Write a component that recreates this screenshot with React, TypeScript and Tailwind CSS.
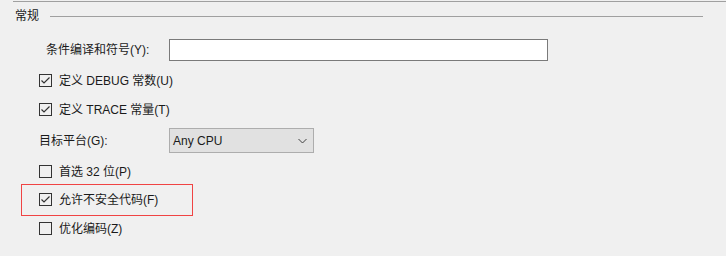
import React from "react";

const font = { fontFamily: '"Liberation Sans", "Noto Sans CJK SC", sans-serif' };

function CheckBox({ checked }: { checked?: boolean }) {
  return (
    <div className="w-[13px] h-[13px] border border-[#333333] bg-[#f0f0f0] shrink-0 flex items-center justify-center">
      {checked && (
        <svg width="11" height="11" viewBox="0 0 11 11">
          <path d="M1.5 5.5 L4 8 L9.5 2.5" fill="none" stroke="#333333" strokeWidth="1.2" />
        </svg>
      )}
    </div>
  );
}

function CheckRow({ label, checked, className = "" }: { label: string; checked?: boolean; className?: string }) {
  return (
    <div className={`h-[13px] flex items-center pl-[39px] ${className}`}>
      <CheckBox checked={checked} />
      <span className="ml-[7px] text-[12px] leading-none text-[#1a1a1a] whitespace-nowrap">{label}</span>
    </div>
  );
}

export default function App() {
  return (
    <div className="w-[726px] h-[256px] bg-[#f0f0f0] overflow-hidden flex flex-col" style={font}>
      <div className="mt-px h-px ml-[13px] bg-[#a0a0a0]" />

      {/* group header */}
      <div className="mt-[7px] h-[14px] flex items-center pl-[15px] pr-[23px]">
        <span className="text-[12px] leading-none text-[#1a1a1a]">常规</span>
        <div className="flex-1 ml-[11px] h-px bg-[#a0a0a0]" />
      </div>

      <div className="mt-[16px] h-[22px] flex items-center">
        <span className="pl-[46px] w-[169px] text-[12px] leading-none text-[#1a1a1a] whitespace-nowrap">条件编译和符号(Y):</span>
        <div className="w-[379px] h-[22px] bg-white border border-[#7a7a7a]" />
      </div>

      <CheckRow label="定义 DEBUG 常数(U)" checked className="mt-[13px]" />
      <CheckRow label="定义 TRACE 常量(T)" checked className="mt-[16px]" />

      <div className="mt-[12px] h-[25px] flex items-center">
        <span className="pl-[39px] w-[169px] text-[12px] leading-none text-[#1a1a1a] whitespace-nowrap">目标平台(G):</span>
        <div className="w-[145px] h-[25px] bg-[#e1e1e1] border border-[#adadad] flex items-center pl-[3px] pr-[6px]">
          <span className="flex-1 text-[12px] leading-none text-[#1a1a1a]">Any CPU</span>
          <svg width="9" height="6" viewBox="0 0 9 6">
            <path d="M0.5 1 L4.5 5 L8.5 1" fill="none" stroke="#404040" strokeWidth="1" />
          </svg>
        </div>
      </div>

      <CheckRow label="首选 32 位(P)" className="mt-[12px]" />

      <div className="mt-[6px] ml-[21px] w-[172px] h-[32px] border border-[#f04444] pt-[8px]">
        <div className="h-[13px] flex items-center pl-[17px]">
          <CheckBox checked />
          <span className="ml-[7px] text-[12px] leading-none text-[#1a1a1a] whitespace-nowrap">允许不安全代码(F)</span>
        </div>
      </div>

      <CheckRow label="优化编码(Z)" className="mt-[6px]" />
    </div>
  );
}
